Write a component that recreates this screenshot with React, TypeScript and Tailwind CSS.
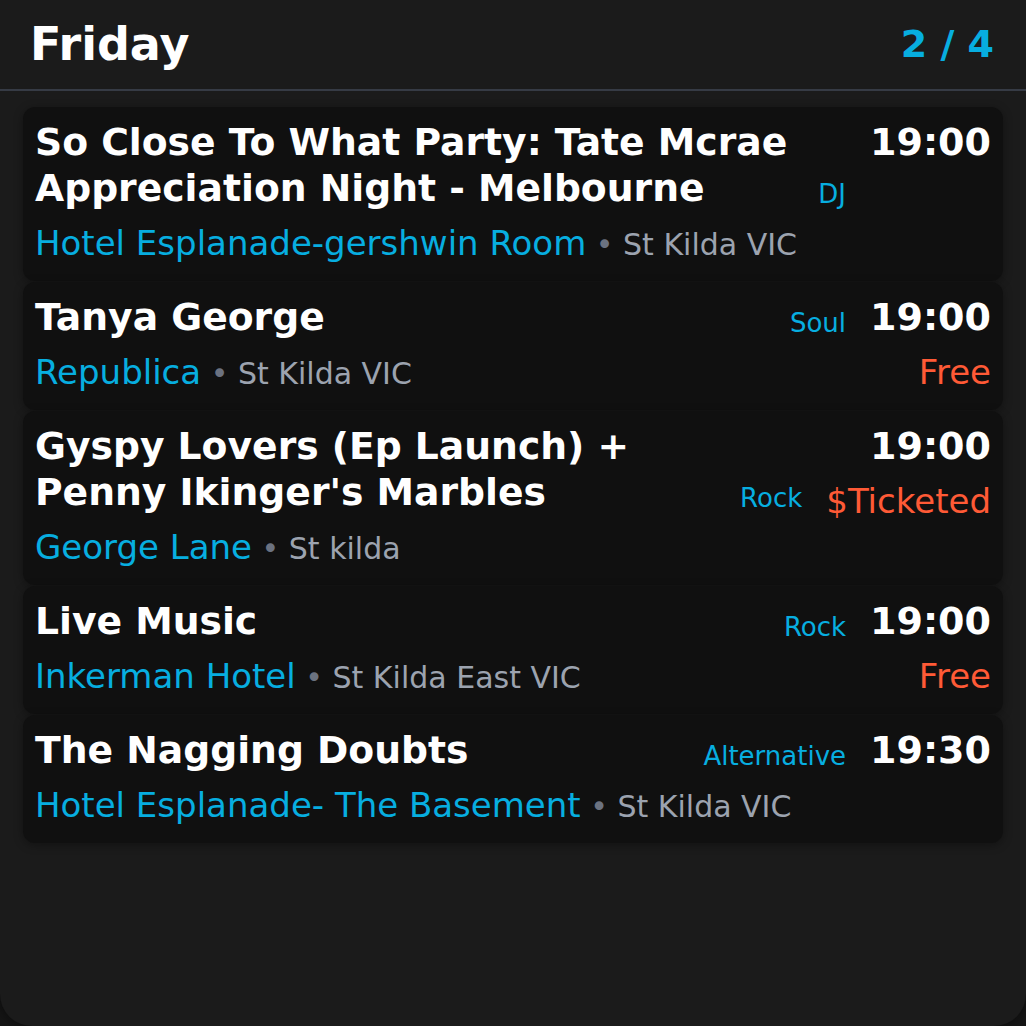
const events = [
  {
    title: "So Close To What Party: Tate Mcrae Appreciation Night - Melbourne",
    genre: "DJ",
    time: "19:00",
    price: "",
    venue: "Hotel Esplanade-gershwin Room",
    loc: "St Kilda VIC",
  },
  { title: "Tanya George", genre: "Soul", time: "19:00", price: "Free", venue: "Republica", loc: "St Kilda VIC" },
  {
    title: "Gyspy Lovers (Ep Launch) + Penny Ikinger's Marbles",
    genre: "Rock",
    time: "19:00",
    price: "$Ticketed",
    venue: "George Lane",
    loc: "St kilda",
  },
  { title: "Live Music", genre: "Rock", time: "19:00", price: "Free", venue: "Inkerman Hotel", loc: "St Kilda East VIC" },
  {
    title: "The Nagging Doubts",
    genre: "Alternative",
    time: "19:30",
    price: "",
    venue: "Hotel Esplanade- The Basement",
    loc: "St Kilda VIC",
  },
];

type Ev = (typeof events)[number];

function EventCard({ ev }: { ev: Ev }) {
  return (
    <div className="flex gap-6 rounded-xl bg-[#101010] p-3 shadow-[0_2px_10px_rgba(0,0,0,0.35)]">
      <div className="flex min-w-0 flex-1 flex-col gap-2">
        <div className="flex items-end gap-4">
          <div className="flex-1 text-[37.7px] font-bold leading-[46px] text-white">{ev.title}</div>
          <div className="text-[26px] leading-[34px] text-[#07aee0]">{ev.genre}</div>
        </div>
        <div className="whitespace-nowrap text-[34px] leading-[48px]">
          <span className="text-[#07aee0]">{ev.venue}</span>
          <span className="text-[30px] text-[#9ca3af]">
            {" "}
            <span className="text-[#6b7280]">•</span> {ev.loc}
          </span>
        </div>
      </div>
      <div className="flex flex-col items-end">
        <div className="text-[38px] font-bold leading-[46px] text-white">{ev.time}</div>
        {ev.price && <div className="mt-2 text-[34px] leading-[48px] text-[#ff5a36]">{ev.price}</div>}
      </div>
    </div>
  );
}

export default function App() {
  return (
    <div className="h-[1026px] w-[1026px] bg-[#151515] font-['DejaVu_Sans',sans-serif]">
      <div className="flex h-full flex-col rounded-b-[32px] bg-[#1b1b1b] shadow-[0_0_12px_rgba(0,0,0,0.5)]">
        <div className="flex h-[89px] items-center justify-between pl-[30px] pr-8">
          <div className="text-[46px] font-bold text-white">Friday</div>
          <div className="text-[38px] font-bold text-[#07aee0]">2 / 4</div>
        </div>
        <div className="h-[2px] bg-[#363b45]" />
        <div className="flex flex-col gap-px px-[23px] pt-4">
          {events.map((ev) => (
            <EventCard key={ev.title} ev={ev} />
          ))}
        </div>
      </div>
    </div>
  );
}
